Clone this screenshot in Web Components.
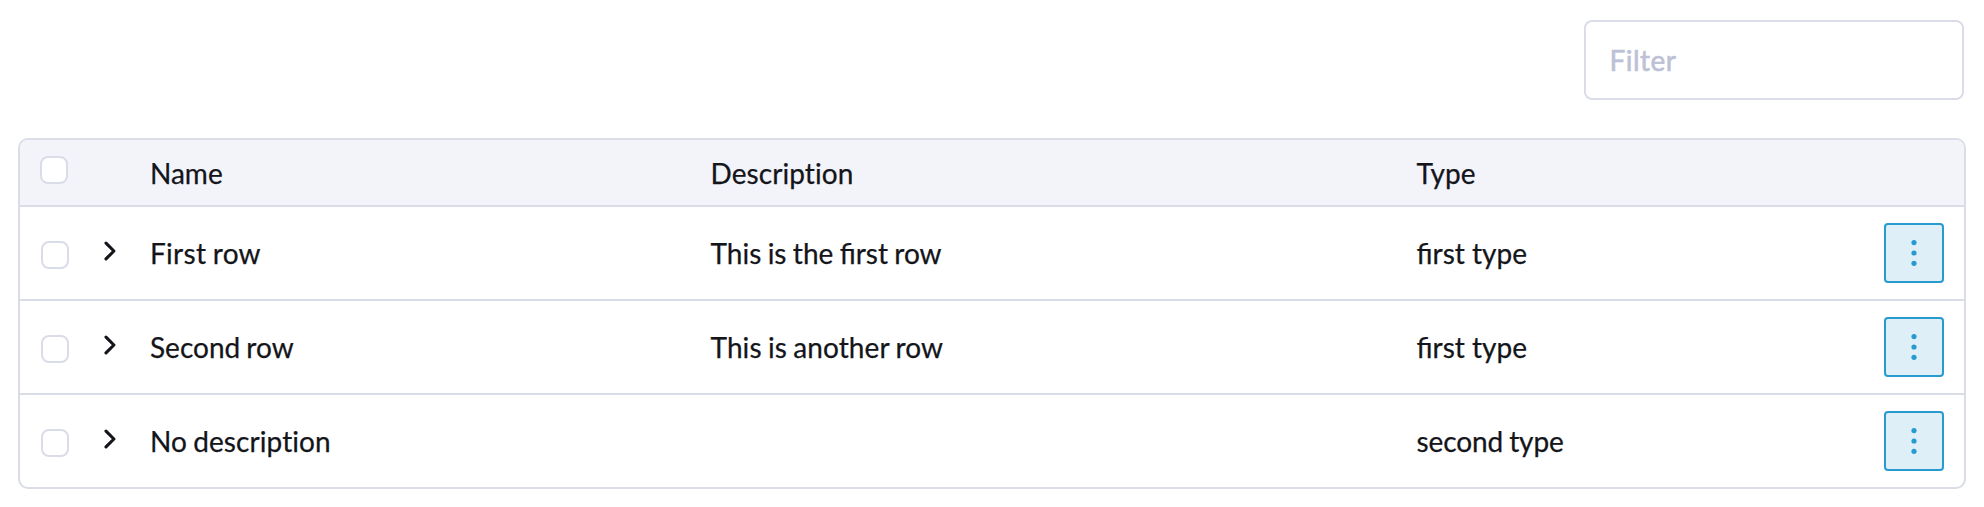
<!DOCTYPE html>
<html lang="en">
<head>
<meta charset="utf-8">
<title>Data table</title>
<style>
body{margin:0;background:#fff;color:#14151a;font:400 28px/36px Lato,"Liberation Sans",sans-serif;-webkit-text-stroke:.25px}
</style>
</head>
<body>
<table-page></table-page>
<script>
function define(name, html, setup) {
  const template = document.createElement('template');
  template.innerHTML = html;
  customElements.define(name, class extends HTMLElement {
    constructor() {
      super();
      this.attachShadow({mode: 'open'}).append(template.content.cloneNode(true));
    }
    connectedCallback() { if (setup) setup(this); }
  });
}

define('filter-field', `
<style>
:host{display:block;width:380px;height:80px;box-sizing:border-box;border:2px solid #dadde8;border-radius:8px;background:#fff}
input{display:block;box-sizing:border-box;width:100%;height:100%;border:0;outline:0;background:none;padding:0 23.5px 0;font:inherit;color:inherit;letter-spacing:.5px}
input::placeholder{color:#bdc1d6;opacity:1;-webkit-text-stroke:.6px #bdc1d6}
</style>
<input type="text">`, el => {
  el.shadowRoot.querySelector('input').placeholder = el.getAttribute('placeholder');
});

define('check-box', `
<style>
:host{display:block;width:28px;height:28px;box-sizing:border-box;border:2px solid #dadde8;border-radius:8px;background:#fff}
</style>`);

define('expand-arrow', `
<style>:host{display:block;width:12px;height:20px}svg{display:block}</style>
<svg width="12" height="20" viewBox="0 0 12 20" fill="none" stroke="#14151a" stroke-width="3.1" stroke-linecap="round" stroke-linejoin="round"><path d="M2 2.1 9.9 10 2 17.9"/></svg>`);

define('more-button', `
<style>
:host{display:block}
button{display:block;width:60px;height:60px;box-sizing:border-box;padding:0;margin:0;border:2px solid #279bd0;border-radius:4px;background:#dfeff7}
svg{display:block}
</style>
<button aria-label="More actions"><svg width="56" height="56" viewBox="0 0 56 56" fill="#279bd0"><circle cx="28" cy="17.6" r="2.6"/><circle cx="28" cy="28" r="2.6"/><circle cx="28" cy="38.3" r="2.6"/></svg></button>`);

define('table-row', `
<style>
:host{display:grid;grid-template-columns:130px 560.5px 706px minmax(0,1fr) 80px;align-items:center;height:92px;border-top:2px solid #dadde8}
:host([header]){height:65px;border-top:0;background:#f3f4fa}
.lead{display:flex;align-items:flex-start;gap:35px;padding-left:21px;height:28px;margin-top:4px}
:host([header]) .lead{padding-left:20px;margin-top:-5px}
.cell{white-space:nowrap}
:host([header]) .cell{padding-top:1px}
:host([header]) expand-arrow,:host([header]) more-button{display:none}
</style>
<div class="lead"><check-box></check-box><expand-arrow></expand-arrow></div>
<div class="cell"><slot name="name"></slot></div>
<div class="cell"><slot name="description"></slot></div>
<div class="cell"><slot name="type"></slot></div>
<more-button></more-button>`);

define('data-table', `
<style>:host{display:block;border:2px solid #dadde8;border-radius:10px;overflow:hidden;background:#fff}</style>
<slot></slot>`);

define('table-page', `
<style>
:host{display:block;padding:20px 18px 0}
.bar{display:flex;justify-content:flex-end;padding-right:2px;margin-bottom:38px}
span{word-spacing:-1px}
.plain{font-variant-ligatures:none;letter-spacing:.08px}
</style>
<div class="bar"><filter-field placeholder="Filter"></filter-field></div>
<data-table>
<table-row header><span slot="name">Name</span><span slot="description" class="plain">Description</span><span slot="type">Type</span></table-row>
<table-row><span slot="name" style="letter-spacing:.3px">First row</span><span slot="description" style="word-spacing:-.8px">This is the first row</span><span slot="type" style="word-spacing:0">first type</span></table-row>
<table-row><span slot="name">Second row</span><span slot="description" style="letter-spacing:.1px">This is another row</span><span slot="type" style="word-spacing:0">first type</span></table-row>
<table-row><span slot="name" class="plain">No description</span><span slot="type" style="word-spacing:-1px;letter-spacing:-.1px">second type</span></table-row>
</data-table>`);
</script>
</body>
</html>
